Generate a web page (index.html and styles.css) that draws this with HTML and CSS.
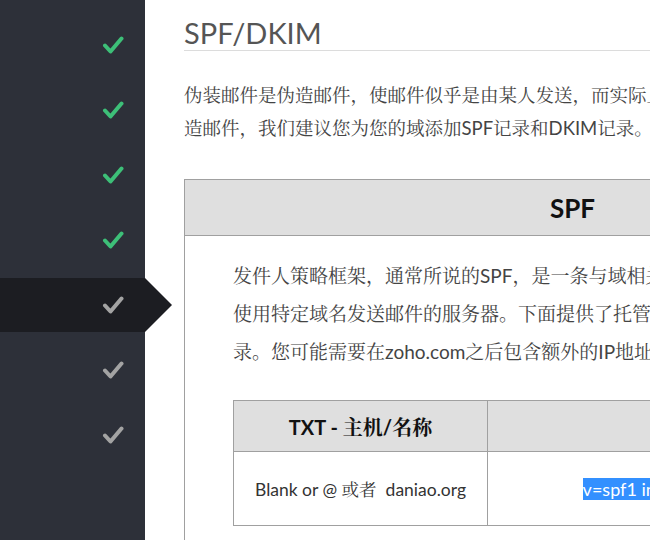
FILE: index.html
```html
<!DOCTYPE html>
<html lang="zh-cn">
<head>
  <meta charset="UTF-8" />
  <title>SPF/DKIM</title>
  <link rel="stylesheet" href="styles.css">
</head>
<body>

  <!-- passos do assistente -->
  <ul class="passos">
    <li class="passo feito"><svg viewBox="0 0 22 20"><path d="M3 10.5 L8.5 16.5 L19.5 3.5" /></svg></li>
    <li class="passo feito"><svg viewBox="0 0 22 20"><path d="M3 10.5 L8.5 16.5 L19.5 3.5" /></svg></li>
    <li class="passo feito"><svg viewBox="0 0 22 20"><path d="M3 10.5 L8.5 16.5 L19.5 3.5" /></svg></li>
    <li class="passo feito"><svg viewBox="0 0 22 20"><path d="M3 10.5 L8.5 16.5 L19.5 3.5" /></svg></li>
    <li class="passo ativo"><svg viewBox="0 0 22 20"><path d="M3 10.5 L8.5 16.5 L19.5 3.5" /></svg></li>
    <li class="passo"><svg viewBox="0 0 22 20"><path d="M3 10.5 L8.5 16.5 L19.5 3.5" /></svg></li>
    <li class="passo"><svg viewBox="0 0 22 20"><path d="M3 10.5 L8.5 16.5 L19.5 3.5" /></svg></li>
  </ul>

  <div class="conteudo">
    <h1>SPF/DKIM</h1>
    <p class="intro">伪装邮件是伪造邮件，使邮件似乎是由某人发送，而实际上却是由别人发送的。为了防止伪造邮件，我们建议您为您的域添加SPF记录和DKIM记录。</p>

    <div class="caixa">
      <div class="caixa-titulo">SPF</div>
      <div class="caixa-corpo">
        <p>发件人策略框架，通常所说的SPF，是一条与域相关联的TXT记录，它列出了被授权使用特定域名发送邮件的服务器。下面提供了托管在Zoho的域所需要添加的SPF记录。您可能需要在zoho.com之后包含额外的IP地址或服务器。</p>

        <table class="registro">
          <tr>
            <th class="col-host">TXT - 主机/名称</th>
            <th class="col-valor">TXT - 值</th>
          </tr>
          <tr>
            <td class="col-host">Blank or @ 或者&nbsp; daniao.org</td>
            <td class="col-valor"><span class="selecionado">v=spf1 include:zoho.com ~all</span></td>
          </tr>
        </table>
      </div>
    </div>
  </div>

</body>
</html>
```

FILE: styles.css
```css
:root {
  --barra: #2d3039;
  --barra-ativa: #1c1d22;
  --verde: #3dbf78;
  --cinza-borda: #a0a0a0;
  --cinza-fundo: #dfdfdf;
}

* {
  margin: 0;
  padding: 0;
  box-sizing: border-box;
}

html, body {
  height: 100%;
  overflow: hidden;
}

body {
  font-family: Lato, "Noto Serif CJK SC", "Noto Sans CJK SC", sans-serif;
  background: #fff;
  color: #444;
  display: flex;
}

/* barra lateral */
.passos {
  list-style: none;
  width: 145px;
  flex: 0 0 145px;
  background-color: var(--barra);
  padding-top: 18px;
  display: flex;
  flex-direction: column;
  gap: 11px;
}

.passo {
  height: 54px;
  display: flex;
  align-items: center;
  justify-content: flex-end;
  padding-right: 21px;
  position: relative;
}

.passo svg {
  width: 22px;
  height: 20px;
  fill: none;
  stroke: #a3a3a3;
  stroke-width: 4;
  stroke-linecap: round;
  stroke-linejoin: round;
}

.passo.feito svg {
  stroke: var(--verde);
}

.passo.ativo {
  background-color: var(--barra-ativa);
}

.passo.ativo::after {
  content: "";
  position: absolute;
  left: 100%;
  top: 0;
  border-top: 27px solid transparent;
  border-bottom: 27px solid transparent;
  border-left: 27px solid var(--barra-ativa);
  z-index: 2;
}

/* conteúdo */
.conteudo {
  flex: 1;
  min-width: 0;
  padding-left: 39px;
}

h1 {
  font-weight: 400;
  font-size: 29px;
  color: #555;
  line-height: 34px;
  padding-top: 16px;
  border-bottom: 1px solid #dcdcdc;
  width: 1000px;
}

.intro {
  font-size: 18.5px;
  line-height: 33px;
  margin-top: 28px;
  width: 755px;
}

.caixa {
  margin-top: 34px;
  width: 777px;
  border: 1px solid var(--cinza-borda);
}

.caixa-titulo {
  height: 56px;
  background-color: var(--cinza-fundo);
  border-bottom: 1px solid var(--cinza-borda);
  display: flex;
  align-items: center;
  justify-content: center;
  font-size: 26px;
  font-weight: 700;
  color: #111;
}

.caixa-corpo {
  padding: 21px 28px 40px 48px;
}

.caixa-corpo p {
  font-size: 19px;
  line-height: 38px;
}

.registro {
  margin-top: 29px;
  width: 674px;
  border-collapse: collapse;
  border: 1px solid var(--cinza-borda);
}

.registro th,
.registro td {
  border: 1px solid var(--cinza-borda);
  text-align: center;
}

.registro th {
  background-color: var(--cinza-fundo);
  height: 51px;
  font-size: 20px;
  color: #111;
}

.registro td {
  height: 74px;
  font-size: 17.5px;
  color: #333;
}

.col-host {
  width: 254px;
}

.selecionado {
  background-color: #3390ff;
  color: #fff;
  font-size: 18px;
}
```
